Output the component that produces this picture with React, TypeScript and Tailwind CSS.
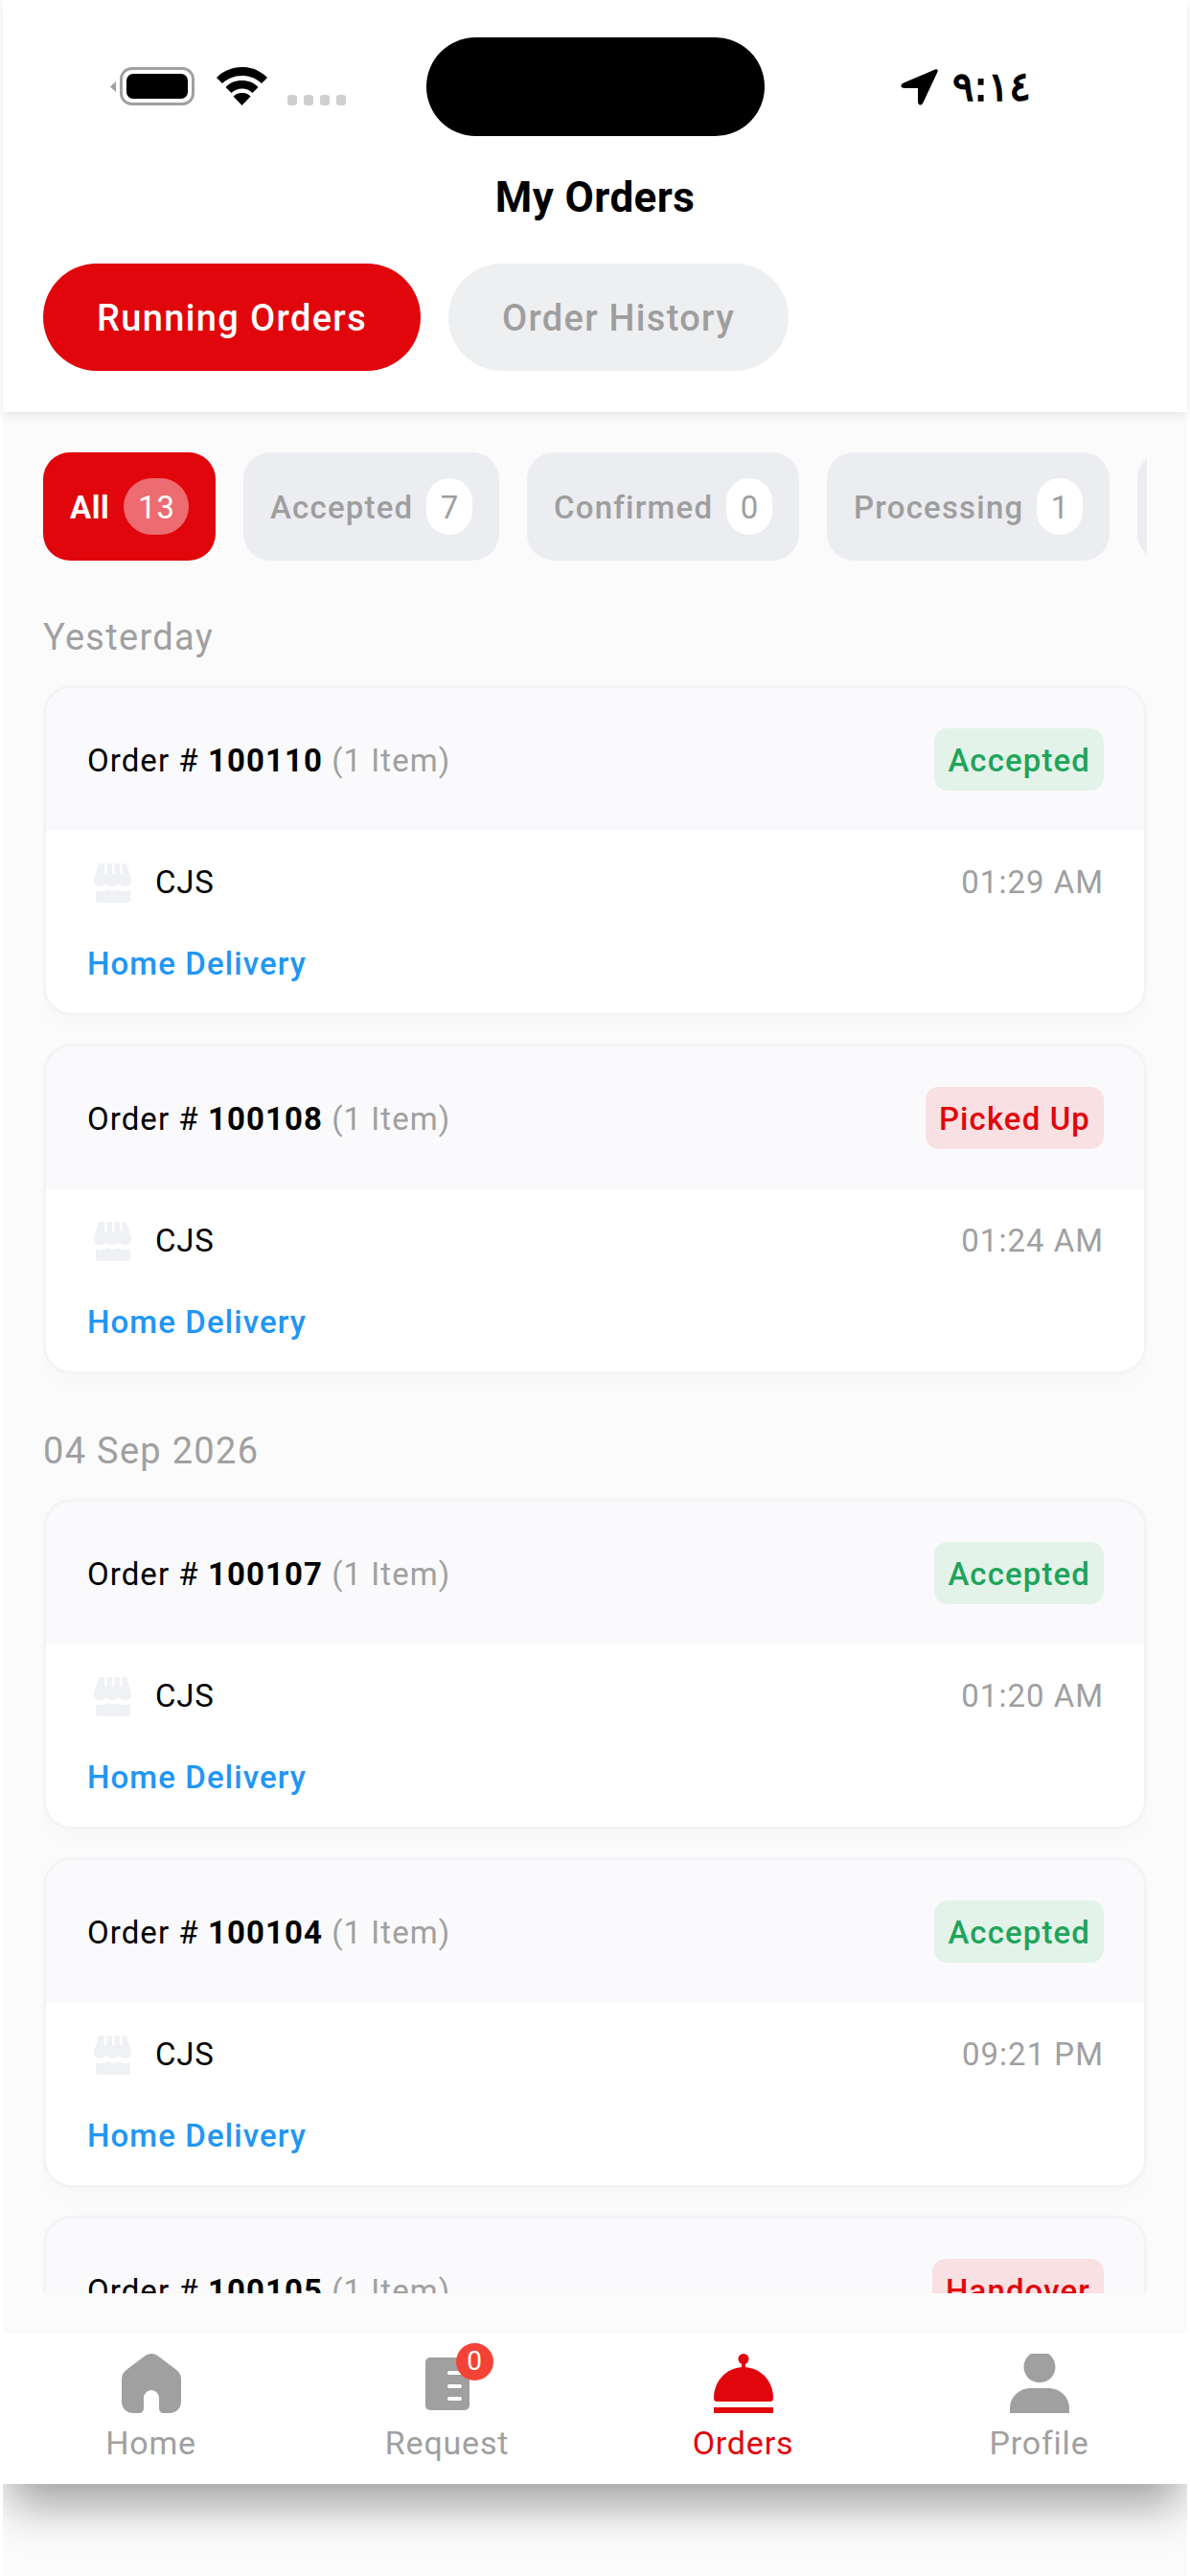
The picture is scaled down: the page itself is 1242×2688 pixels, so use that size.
const orders = [
  { id: '100110', status: 'Accepted', time: '01:29 AM' },
  { id: '100108', status: 'Picked Up', time: '01:24 AM' },
];
const orders2 = [
  { id: '100107', status: 'Accepted', time: '01:20 AM' },
  { id: '100104', status: 'Accepted', time: '09:21 PM' },
];

function StoreIcon() {
  return (
    <svg width="40" height="41" viewBox="0 0 40 41" fill="#eff1f4">
      <path d="M5 0h6v10h2.500V0h5.500v10h2.500V0h5.500v10h2.500V0h4.500l5 17c.5 5-2.500 7-6 7-3 0-5-1-6.500-3-2 2-4 3-7 3s-5-1-7-3c-1.500 2-3.500 3-6.500 3-3.500 0-6.500-2-6-7z" />
      <path d="M2 28c2 1 4 1 6 1 3 0 5-1 7-2 3 2 7 2 10 0 2 1 4 2 7 2 2 0 4 0 6-1v10c0 2-1 3-3 3H5c-2 0-3-1-3-3z" />
    </svg>
  );
}

function OrderCard({ id, status, time }: { id: string; status: string; time: string }) {
  const green = status === 'Accepted';
  return (
    <div className="h-[345px] rounded-[30px] border-[3px] border-[#f3f4f6] bg-white overflow-hidden shrink-0 shadow-[0_8px_24px_rgba(0,0,0,0.02)]">
      <div className="h-[149px] bg-[#fafafc] flex items-center justify-between pl-[43px] pr-[42px]">
        <div className="text-[33px] tracking-[1.050px] text-black pt-[3px]">
          Order # <span className="font-bold">{id}</span> <span className="text-[#a0a0a0]">(1 Item)</span>
        </div>
        <div className={`h-[65px] px-[14px] pt-[2px] rounded-[14px] flex items-center text-[33px] font-medium tracking-[1.1px] ${green ? 'bg-[#e3f3ea] text-[#1fa45a]' : 'bg-[#f9e0e2] text-[#e0060c]'}`}>
          {status}
        </div>
      </div>
      <div className="pl-[43px] pr-[42px]">
        <div className="flex items-center justify-between h-[42px] mt-[33px]">
          <div className="flex items-center">
            <div className="ml-[7px] mr-[24px]"><StoreIcon /></div>
            <span className="text-[33px] text-black tracking-[0.8px]">CJS</span>
          </div>
          <span className="text-[33px] text-[#a0a0a0] tracking-[1px]">{time}</span>
        </div>
        <div className="mt-[43px] text-[33px] font-medium text-[#2196f3] tracking-[1.1px] leading-[42px]">Home Delivery</div>
      </div>
    </div>
  );
}

function Chip({ label, count, width }: { label: string; count: string; width: string }) {
  return (
    <div className={`h-[113px] rounded-[28px] bg-[#ecedf1] flex items-center justify-between pl-[28px] pr-[28px] shrink-0 ${width}`}>
      <span className="text-[33px] font-medium text-[#9e9e9e] tracking-[1.2px] pt-[2px]">{label}</span>
      <span className="w-[48px] h-[59px] pt-[2px] rounded-full bg-white flex items-center justify-center text-[33px] text-[#9e9e9e]">{count}</span>
    </div>
  );
}

function NavItem({ label, active, children }: { label: string; active?: boolean; children: React.ReactNode }) {
  return (
    <div className="flex-1 flex flex-col items-center pt-[21px]">
      <div className="h-[62px] flex items-center justify-center">{children}</div>
      <div className={`mt-[11px] text-[34px] leading-[40px] tracking-[0.8px] ${active ? 'text-[#e0060c]' : 'text-[#a0a0a0]'}`}>{label}</div>
    </div>
  );
}

export default function App() {
  return (
    <div className="w-[1242px] h-[2688px] bg-white px-[3px] overflow-hidden flex flex-col font-['Roboto',sans-serif]">
      {/* header */}
      <div className="h-[430px] bg-white shrink-0 relative z-10 shadow-[0_3px_10px_rgba(0,0,0,0.09)]">
        <div className="flex items-start pt-[39px] h-[142px]">
          <div className="flex items-center ml-[112px] mt-[31px] h-[40px] w-[330px]">
            <svg width="88" height="40" viewBox="0 0 88 40">
              <path d="M6 15v11l-6-5.500z" fill="#a0a0a0" />
              <rect x="11.500" y="1.500" width="75" height="37" rx="11" fill="none" stroke="#a0a0a0" strokeWidth="3" />
              <rect x="17" y="7" width="64" height="26" rx="7" fill="#000" />
            </svg>
            <svg className="ml-[23px]" width="53" height="40" viewBox="0 0 53 40" fill="#000">
              <path d="M26.500 0C16 0 7 4 0 11l6 6c5.500-5 12.500-8 20.500-8S41.500 12 47 17l6-6C46 4 37 0 26.500 0z" />
              <path d="M26.500 14c-7 0-13 2.500-17 7l6 6c3-3 7-4.500 11-4.500s8 1.500 11 4.500l6-6c-4-4.500-10-7-17-7z" />
              <path d="M26.500 27c-3.500 0-6.500 1-9 3.500l9 9.500 9-9.500c-2.500-2.500-5.500-3.500-9-3.500z" />
            </svg>
            <div className="ml-[21px] mt-[28px] flex gap-[7px]">
              <div className="w-[10px] h-[11px] rounded-[3px] bg-[#cfcfcf]" />
              <div className="w-[10px] h-[11px] rounded-[3px] bg-[#cfcfcf]" />
              <div className="w-[10px] h-[11px] rounded-[3px] bg-[#cfcfcf]" />
              <div className="w-[10px] h-[11px] rounded-[3px] bg-[#cfcfcf]" />
            </div>
          </div>
          <div className="w-[353px] h-[103px] rounded-full bg-black" />
          <div className="flex items-center ml-[142px] mt-[30px] h-[44px]">
            <svg width="39" height="38" viewBox="0 0 39 38" fill="#000">
              <path d="M36 0.500 3 14.500c-4 1.700-3 5.500 1 5.500h14v14c0 4 3.500 5 5.500 1L38.500 3c.8-2-.5-3.300-2.500-2.500z" />
            </svg>
            <span className="ml-[15px] text-[42px] font-normal text-black font-['DejaVu_Sans',sans-serif] leading-[44px] [-webkit-text-stroke:1.500px_#000]">٩:١٤</span>
          </div>
        </div>
        <div className="mt-[37px] text-center text-[44px] font-bold leading-[54px] tracking-[0.4px] text-black">My Orders</div>
        <div className="flex gap-[29px] ml-[42px] mt-[42px]">
          <div className="h-[112px] w-[394px] pt-[2px] rounded-full bg-[#e0060c] flex items-center justify-center text-[38px] font-medium text-white tracking-[1.350px]">Running Orders</div>
          <div className="h-[112px] w-[355px] pt-[2px] rounded-full bg-[#eeeff1] flex items-center justify-center text-[38px] font-medium text-[#9e9e9e] tracking-[1.300px]">Order History</div>
        </div>
      </div>

      {/* list */}
      <div className="h-[2005px] shrink-0 bg-[#fbfbfc] pt-[42px] pb-[42px] flex flex-col">
        <div className="mx-[42px] flex-1 overflow-hidden">
          <div className="flex gap-[29px] overflow-hidden">
            <div className="h-[113px] w-[180px] rounded-[28px] bg-[#e0060c] flex items-center pl-[28px] shrink-0">
              <span className="text-[33px] font-bold text-white tracking-[0.6px] pt-[2px]">All</span>
              <span className="ml-[15px] w-[68px] h-[59px] pt-[2px] rounded-full bg-[#ec6c72] flex items-center justify-center text-[33px] text-white tracking-[0.6px]">13</span>
            </div>
            <Chip label="Accepted" count="7" width="w-[267px]" />
            <Chip label="Confirmed" count="0" width="w-[284px]" />
            <Chip label="Processing" count="1" width="w-[295px]" />
            <div className="h-[113px] w-[120px] rounded-[28px] bg-[#ecedf1] shrink-0" />
          </div>

          <div className="mt-[55px] text-[38px] leading-[50px] text-[#a0a0a0] tracking-[1.300px]">Yesterday</div>
          <div className="mt-[25px] flex flex-col gap-[29px]">
            {orders.map(o => <OrderCard key={o.id} {...o} />)}
          </div>

          <div className="mt-[55px] text-[38px] leading-[50px] text-[#a0a0a0] tracking-[1.300px]">04 Sep 2026</div>
          <div className="mt-[25px] flex flex-col gap-[29px]">
            {orders2.map(o => <OrderCard key={o.id} {...o} />)}
            <OrderCard id="100105" status="Handover" time="09:10 PM" />
          </div>
        </div>
      </div>

      {/* bottom nav */}
      <div className="flex-1 bg-[#fbfbfb] overflow-hidden">
        <div className="h-[157px] bg-white flex shadow-[0_30px_44px_-8px_rgba(0,0,0,0.36)]">
          <NavItem label="Home">
            <svg width="62" height="62" viewBox="0 0 62 62" fill="#a0a0a0">
              <path d="M31 0c-3 0-5 1-7 2.500L6 16c-4 3-6 6-6 11v23c0 7 5 12 12 12h6c3 0 5-2 5-5V46c0-4 4-8 8-8s8 4 8 8v11c0 3 2 5 5 5h6c7 0 12-5 12-12V27c0-5-2-8-6-11L38 2.500C36 1 34 0 31 0z" />
            </svg>
          </NavItem>
          <NavItem label="Request">
            <div className="relative w-[46px] h-[55px]">
              <svg width="46" height="55" viewBox="0 0 46 55">
                <rect width="46" height="55" rx="5" fill="#a0a0a0" />
                <rect x="23" y="14" width="15" height="4" rx="2" fill="#fff" />
                <rect x="23" y="28" width="15" height="4" rx="2" fill="#fff" />
                <rect x="23" y="41" width="15" height="4" rx="2" fill="#fff" />
              </svg>
              <div className="absolute left-[32px] top-[-15px] w-[39px] h-[39px] rounded-full bg-[#f44336] flex items-center justify-center text-[28px] text-white">0</div>
            </div>
          </NavItem>
          <NavItem label="Orders" active>
            <svg width="62" height="62" viewBox="0 0 62 62" fill="#e0060c">
              <circle cx="31" cy="5.500" r="5.500" />
              <rect x="29" y="8" width="4" height="8" />
              <path d="M0 46C0 28 14 14 31 14s31 14 31 32q0 4-3 4H3q-3 0-3-4z" />
              <rect y="56" width="62" height="6" />
            </svg>
          </NavItem>
          <NavItem label="Profile">
            <svg width="62" height="62" viewBox="0 0 62 62" fill="#a0a0a0">
              <path d="M22 0h18a16.500 16.500 0 1 1-18 0z" />
              <path d="M0 62v-5c0-12 10-21 22-21h18c12 0 22 9 22 21v5z" />
            </svg>
          </NavItem>
        </div>
      </div>
    </div>
  );
}
